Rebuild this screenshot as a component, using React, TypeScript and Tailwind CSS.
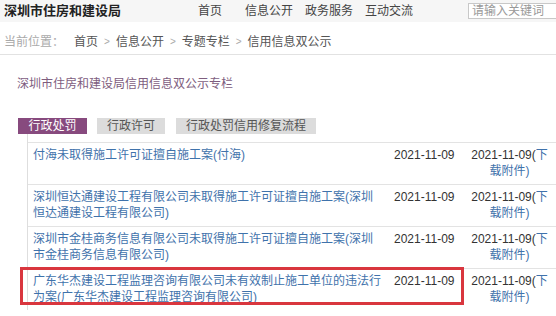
import React from "react";

const rows = [
  { title: "付海未取得施工许可证擅自施工案(付海)", date: "2021-11-09", hl: false },
  { title: "深圳恒达通建设工程有限公司未取得施工许可证擅自施工案(深圳恒达通建设工程有限公司)", date: "2021-11-09", hl: false },
  { title: "深圳市金桂商务信息有限公司未取得施工许可证擅自施工案(深圳市金桂商务信息有限公司)", date: "2021-11-09", hl: false },
  { title: "广东华杰建设工程监理咨询有限公司未有效制止施工单位的违法行为案(广东华杰建设工程监理咨询有限公司)", date: "2021-11-09", hl: true },
];

export default function App() {
  return (
    <div className="w-[556px] h-[316px] overflow-hidden bg-white text-[12px] leading-[16px] text-[#333] font-['Liberation_Sans','Noto_Sans_CJK_SC',sans-serif]">
      {/* header */}
      <div className="flex items-center h-[22px] bg-[#f6f6f6] whitespace-nowrap">
        <div className="w-[198px] shrink-0 pl-[4px] text-[13px] font-bold text-[#222]">深圳市住房和建设局</div>
        <span className="text-[#444]">首页</span>
        <span className="ml-[23px] text-[#444]">信息公开</span>
        <span className="ml-[12px] text-[#444]">政务服务</span>
        <span className="ml-[12px] text-[#444]">互动交流</span>
        <div className="ml-[55px] w-[110px] shrink-0 h-[16px] border border-[#c8c8c8] bg-white pl-[3px] leading-[14px] text-[#999]">请输入关键词</div>
      </div>
      {/* breadcrumb */}
      <div className="h-[33px] pt-[12px] pl-[4px] border-b border-[#e2e2e2] whitespace-nowrap flex">
        <span className="text-[#aaa]">当前位置：</span>
        <span className="ml-[10px] text-[#555]">首页</span>
        <span className="mx-[6px] text-[#aaa] text-[10px]">&gt;</span>
        <span className="text-[#555]">信息公开</span>
        <span className="mx-[6px] text-[#aaa] text-[10px]">&gt;</span>
        <span className="text-[#555]">专题专栏</span>
        <span className="mx-[6px] text-[#aaa] text-[10px]">&gt;</span>
        <span className="text-[#555]">信用信息双公示</span>
      </div>
      {/* column title */}
      <div className="mt-[21px] pl-[17px] text-[#7e5d7e]">深圳市住房和建设局信用信息双公示专栏</div>
      {/* tabs */}
      <div className="mt-[26px] pl-[18px] flex">
        <div className="w-[69px] h-[16px] text-center bg-[#874a7e] text-white">行政处罚</div>
        <div className="ml-[10px] w-[68px] h-[16px] text-center bg-[#dcdcdc] text-[#555]">行政许可</div>
        <div className="ml-[11px] w-[140px] h-[16px] text-center bg-[#dcdcdc] text-[#555]">行政处罚信用修复流程</div>
      </div>
      {/* table */}
      <div className="ml-[27px] border-l border-[#dedede] pt-[8px] w-[540px]">
        {rows.map((r, i) => (
          <div key={i} className="relative flex h-[42px] border-t border-[#e3e3e3]">
            <div className="w-[361px] pl-[5px] pr-[6px] pt-[4px] text-[#3f72ab]">{r.title}</div>
            <div className="w-[74px] pl-[5px] pt-[4px] text-[#333]">{r.date}</div>
            <div className="w-[93px] px-[4px] pt-[4px] text-center">
              <span className="text-[#333]">2021-11-09(</span>
              <span className="text-[#3f72ab]">下载附件)</span>
            </div>
            {r.hl && (
              <div className="absolute left-[-8px] top-[-2px] w-[444px] h-[38px] border-[3px] border-[#d9363e]" />
            )}
          </div>
        ))}
      </div>
    </div>
  );
}
